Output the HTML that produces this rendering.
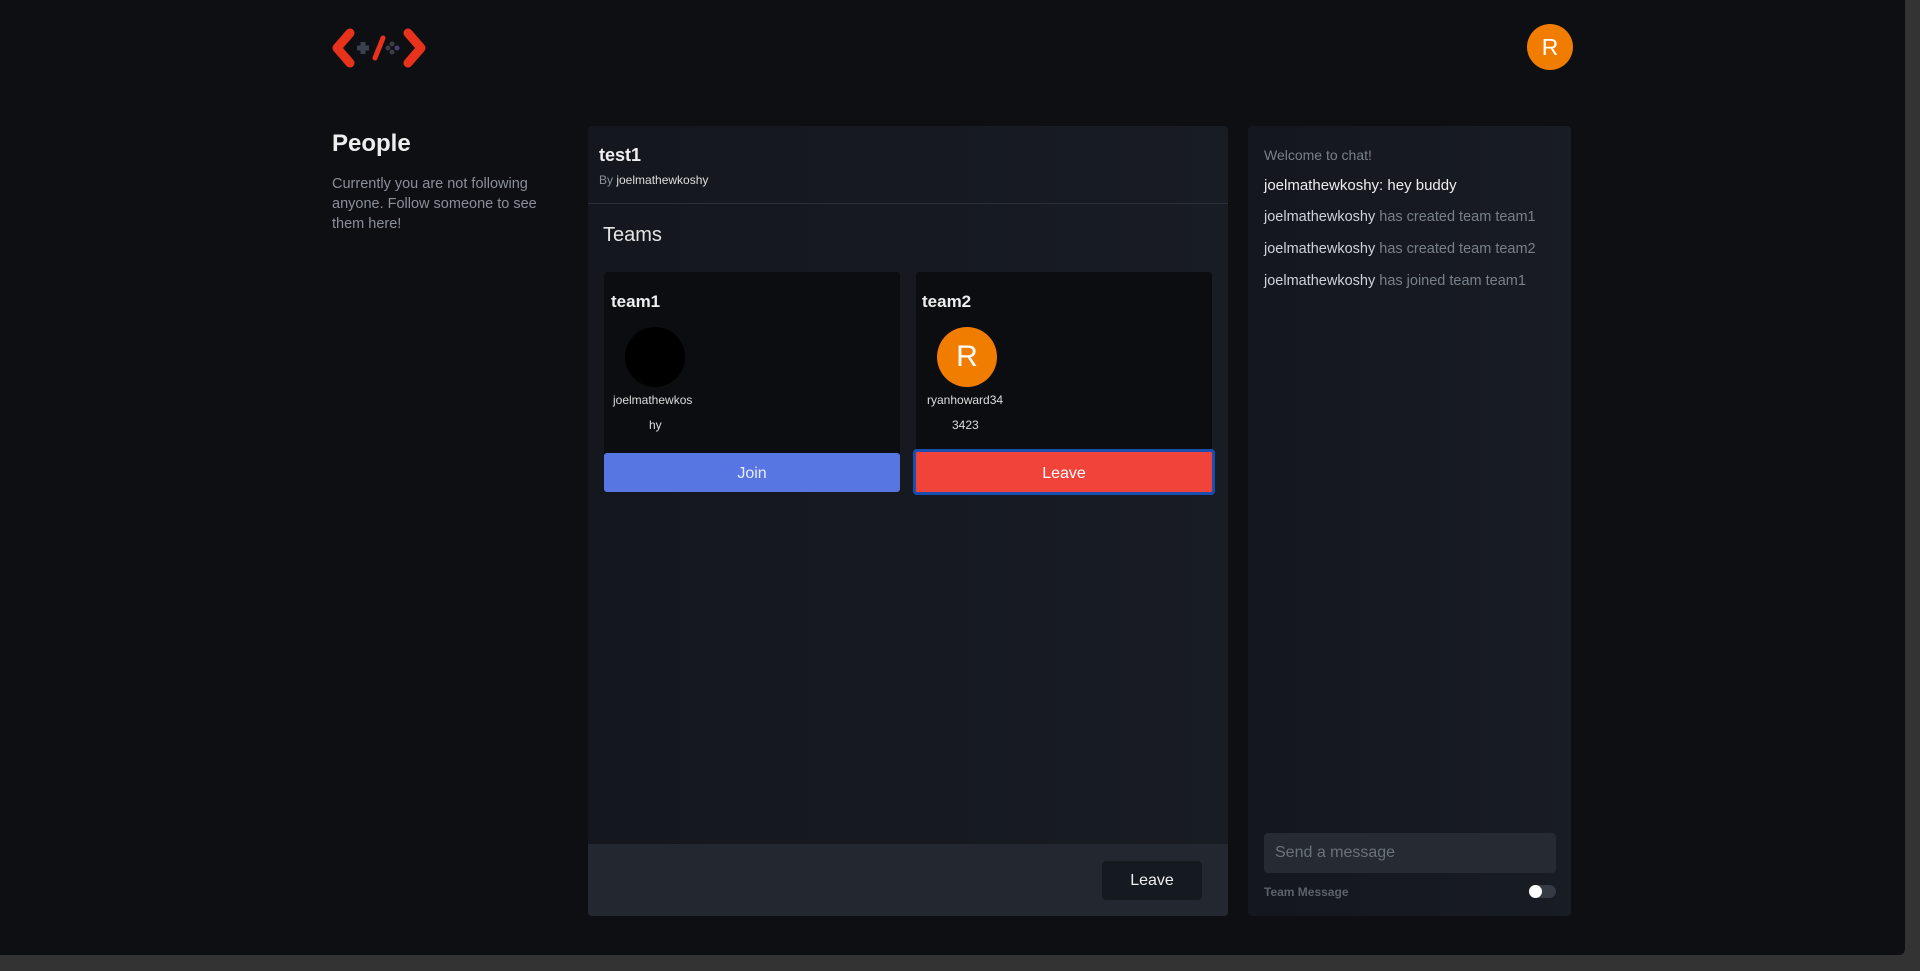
<!DOCTYPE html>
<html><head><meta charset="utf-8"><style>
*{box-sizing:border-box;margin:0;padding:0}
body{width:1920px;height:971px;background:#333;font-family:"Liberation Sans",sans-serif;overflow:hidden;position:relative}
.main{position:absolute;left:0;top:0;width:1905px;height:955px;background:#0e0f13;border-bottom-right-radius:6px}
.abs{position:absolute}
.panel{background:linear-gradient(90deg,#14171d,#181c23);border-radius:4px}
.card{background:#0c0d11;border-radius:3px}
</style></head><body>
<div class="main">
<svg class="abs" style="left:330px;top:27px" width="98" height="42" viewBox="0 0 98 42">
<path d="M20 6 L7 21 L20 36" stroke="#e8321c" stroke-width="9" fill="none" stroke-linecap="round" stroke-linejoin="round"/>
<path d="M78 6 L91 21 L78 36" stroke="#e8321c" stroke-width="9" fill="none" stroke-linecap="round" stroke-linejoin="round"/>
<path d="M53 11 L45 31" stroke="#e8321c" stroke-width="5" stroke-linecap="round"/>
<path d="M27 21 H39 M33 15 V27" stroke="#3a4050" stroke-width="5"/>
<circle cx="62" cy="17" r="2.5" fill="#3a3d46"/><circle cx="62" cy="25" r="2.5" fill="#3a3d46"/><circle cx="58" cy="21" r="2.5" fill="#3a3d46"/><circle cx="67" cy="21" r="2.5" fill="#4a3f70"/>
</svg>
<div class="abs" style="left:1527px;top:24px;width:46px;height:46px;border-radius:50%;background:#f07c00;color:#fff;font-size:23px;text-align:center;line-height:46px">R</div>

<div class="abs" style="left:332px;top:130px;color:#eee;font-size:24px;font-weight:bold">People</div>
<div class="abs" style="left:332px;top:174px;width:225px;color:#8a8f99;font-size:14.5px;line-height:20px">Currently you are not following anyone. Follow someone to see them here!</div>

<div class="abs panel" style="left:588px;top:126px;width:640px;height:790px;overflow:hidden">
  <div class="abs" style="left:11px;top:19px;color:#eee;font-size:18px;font-weight:bold">test1</div>
  <div class="abs" style="left:11px;top:47px;font-size:12px;color:#8a8f99">By <span style="color:#ddd">joelmathewkoshy</span></div>
  <div class="abs" style="left:0;top:77px;width:640px;height:1px;background:#2a2f38"></div>
  <div class="abs" style="left:15px;top:98px;color:#e5e5e5;font-size:20px">Teams</div>
  <div class="abs card" style="left:16px;top:146px;width:296px;height:220px">
    <div class="abs" style="left:7px;top:20px;color:#eee;font-size:17px;font-weight:bold">team1</div>
    <div class="abs" style="left:21px;top:55px;width:60px;height:60px;border-radius:50%;background:#000"></div>
    <div class="abs" style="left:9px;top:121px;color:#ddd;font-size:12px">joelmathewkos</div>
    <div class="abs" style="left:45px;top:146px;color:#ddd;font-size:12px">hy</div>
    <div class="abs" style="left:0;top:181px;width:296px;height:39px;background:#5876e2;border-radius:3px;color:#e8ecff;font-size:16px;text-align:center;line-height:41px">Join</div>
  </div>
  <div class="abs card" style="left:328px;top:146px;width:296px;height:220px">
    <div class="abs" style="left:6px;top:20px;color:#eee;font-size:17px;font-weight:bold">team2</div>
    <div class="abs" style="left:21px;top:55px;width:60px;height:60px;border-radius:50%;background:#f07c00;color:#fff;font-size:30px;text-align:center;line-height:60px">R</div>
    <div class="abs" style="left:11px;top:121px;color:#ddd;font-size:12px">ryanhoward34</div>
    <div class="abs" style="left:36px;top:146px;color:#ddd;font-size:12px">3423</div>
    <div class="abs" style="left:-3px;top:177px;width:302px;height:46px;border:3px solid #1a4fb0;border-radius:4px;background:#f2433a;color:#fff;font-size:16px;text-align:center;line-height:43px">Leave</div>
  </div>
  <div class="abs" style="left:0;top:718px;width:640px;height:72px;background:#232830"></div>
  <div class="abs" style="left:514px;top:735px;width:100px;height:39px;background:#151a21;border-radius:4px;color:#eee;font-size:16px;text-align:center;line-height:40px">Leave</div>
</div>

<div class="abs panel" style="left:1248px;top:126px;width:323px;height:790px">
  <div class="abs" style="left:16px;top:19px;font-size:14px;color:#7a808a;line-height:20px">Welcome to chat!</div>
  <div class="abs" style="left:16px;top:51px;font-size:15px;color:#eee">joelmathewkoshy: hey buddy</div>
  <div class="abs" style="left:16px;top:83px;font-size:14.5px;color:#cfd2d8">joelmathewkoshy <span style="color:#7a808a">has created team team1</span></div>
  <div class="abs" style="left:16px;top:115px;font-size:14.5px;color:#cfd2d8">joelmathewkoshy <span style="color:#7a808a">has created team team2</span></div>
  <div class="abs" style="left:16px;top:147px;font-size:14.5px;color:#cfd2d8">joelmathewkoshy <span style="color:#7a808a">has joined team team1</span></div>
  <div class="abs" style="left:16px;top:707px;width:292px;height:40px;background:#252a33;border-radius:4px;color:#6c727c;font-size:16px;line-height:40px;padding-left:11px">Send a message</div>
  <div class="abs" style="left:16px;top:759px;font-size:12px;font-weight:bold;color:#5c626c">Team Message</div>
  <div class="abs" style="left:281px;top:759px;width:27px;height:13px;border-radius:7px;background:#353a44"></div>
  <div class="abs" style="left:281px;top:759px;width:13px;height:13px;border-radius:50%;background:#fff"></div>
</div>
</div>
</body></html>
